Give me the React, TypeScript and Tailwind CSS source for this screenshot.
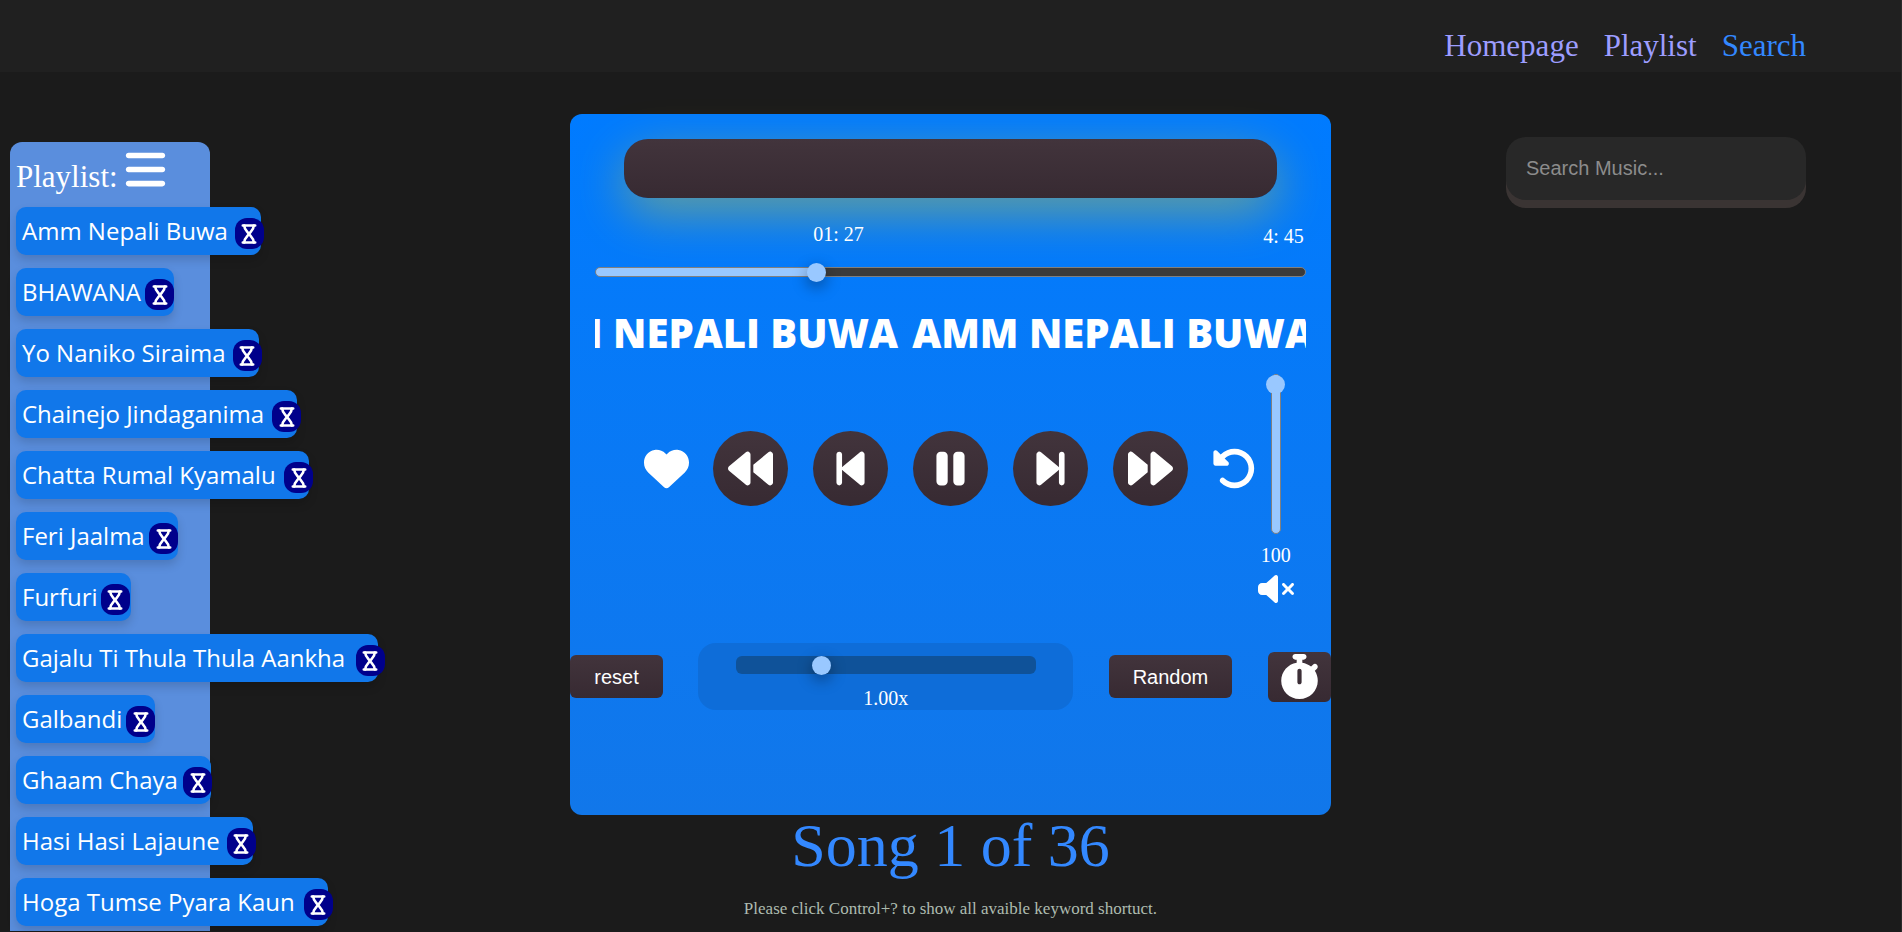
import { useState } from "react";
import type { ReactNode } from "react";
import {
  FaBackward,
  FaBackwardStep,
  FaBars,
  FaForward,
  FaForwardStep,
  FaHeart,
  FaPause,
  FaRotateLeft,
  FaStopwatch,
  FaVolumeXmark,
} from "react-icons/fa6";

const songs = [
  "Amm Nepali Buwa",
  "BHAWANA",
  "Yo Naniko Siraima",
  "Chainejo Jindaganima",
  "Chatta Rumal Kyamalu",
  "Feri Jaalma",
  "Furfuri",
  "Gajalu Ti Thula Thula Aankha",
  "Galbandi",
  "Ghaam Chaya",
  "Hasi Hasi Lajaune",
  "Hoga Tumse Pyara Kaun",
];

const thumb =
  "[&::-webkit-slider-thumb]:appearance-none [&::-webkit-slider-thumb]:size-[19px] [&::-webkit-slider-thumb]:rounded-full [&::-webkit-slider-thumb]:bg-[#99c8ff] [&::-webkit-slider-thumb]:shadow-[0_5px_15px_rgba(0,0,0,0.4)]";

const dark = "bg-linear-to-b from-[#42343c] to-[#372a32] text-white";

function Hourglass() {
  return (
    <svg viewBox="0 0 16 20" className="h-5 w-4" fill="none" stroke="currentColor" strokeWidth="2.6" strokeLinecap="round" strokeLinejoin="round">
      <path d="M1.8 1.5H14.2M1.8 18.5H14.2" />
      <path d="M3.2 1.5C3.2 5.8 6 7.4 8 10C10 7.4 12.8 5.8 12.8 1.5" />
      <path d="M3.2 18.5C3.2 14.2 6 12.6 8 10C10 12.6 12.8 14.2 12.8 18.5" />
    </svg>
  );
}

function Header() {
  return (
    <header className="h-[72px] shrink-0 bg-[#202020] pr-[95px] pt-7">
      <nav className="flex justify-end gap-[25px] text-[31px] leading-9 text-[#9d9dff]">
        <a href="#home">Homepage</a>
        <a href="#playlist">Playlist</a>
        <a href="#search" className="text-[#3388ff]">Search</a>
      </nav>
    </header>
  );
}

function Sidebar() {
  return (
    <aside className="mb-px ml-2.5 mt-[70px] w-[200px] rounded-t-xl bg-[#5a8edd] px-1.5">
      <h2 className="flex h-[65px] items-start gap-[5px] whitespace-nowrap pt-[5px] text-[31px] text-white">
        <span className="pt-3 leading-9">Playlist:</span>
        <button type="button" aria-label="Toggle playlist">
          <FaBars className="size-[45px]" />
        </button>
      </h2>
      <ul className="flex flex-col items-start gap-[13px]">
        {songs.map((song) => (
          <li
            key={song}
            className="h-12 whitespace-nowrap rounded-[10px] bg-[#1177ea] pl-1.5 pr-1 font-['Open_Sans',sans-serif] text-2xl leading-[48px] text-white shadow-[0_5px_10px_rgba(0,0,0,0.15)]"
          >
            <button type="button">{song}</button>
            <button
              type="button"
              aria-label={"Queue " + song}
              className="ml-[3%] inline-flex h-[31px] w-[29px] items-center justify-center rounded-xl bg-[#00008b] align-middle"
            >
              <Hourglass />
            </button>
          </li>
        ))}
      </ul>
    </aside>
  );
}

function Circle({ label, children }: { label: string; children: ReactNode }) {
  return (
    <button
      type="button"
      aria-label={label}
      className={`flex size-[75px] items-center justify-center rounded-full text-[45px] ${dark}`}
    >
      {children}
    </button>
  );
}

function Player() {
  const [time, setTime] = useState(87);
  const [volume, setVolume] = useState(100);
  const [speed, setSpeed] = useState(1);
  const filled = (time / 285) * 100;

  return (
    <section className="h-[701px] rounded-xl bg-linear-to-b from-[#007bff] to-[#1177ea] pt-[25px] text-xl text-white">
      <div className="mx-[54px] h-[59px] rounded-3xl bg-linear-to-b from-[#42343c] to-[#372a32] shadow-[0_15px_50px_rgba(255,215,0,0.4)]" />

      <div className="mx-[25px]">
        <div className="mt-6 flex h-[45px] justify-between pr-0.5 leading-6">
          <span className="pl-[218px]">01: 27</span>
          <span className="pt-0.5">4: 45</span>
        </div>
        <input
          type="range"
          aria-label="Song position"
          min={0}
          max={285}
          value={time}
          onChange={(e) => setTime(Number(e.target.value))}
          className={`block h-2.5 w-full appearance-none rounded-md border border-[#808080] ${thumb}`}
          style={{ background: `linear-gradient(to right, #99c8ff ${filled}%, #3b3b3b ${filled}%)` }}
        />
        <div className="mt-7 flex h-14 gap-3.5 overflow-hidden whitespace-nowrap font-['Open_Sans',sans-serif] text-[40px] font-extrabold leading-[56px]">
          <span className="-ml-[99px]">AMM NEPALI BUWA</span>
          <span>AMM NEPALI BUWA</span>
        </div>
      </div>

      <div className="mt-[13px] flex h-[237px] items-start justify-end pr-9">
        <div className="mt-[57px] flex items-center gap-6">
          <button type="button" aria-label="Like">
            <FaHeart className="size-[45px]" />
          </button>
          <div className="flex gap-[25px]">
            <Circle label="Rewind"><FaBackward /></Circle>
            <Circle label="Previous"><FaBackwardStep /></Circle>
            <Circle label="Pause"><FaPause /></Circle>
            <Circle label="Next"><FaForwardStep /></Circle>
            <Circle label="Fast forward"><FaForward /></Circle>
          </div>
          <button type="button" aria-label="Repeat">
            <FaRotateLeft className="size-[45px]" />
          </button>
        </div>
        <div className="flex w-[38px] flex-col items-center">
          <input
            type="range"
            aria-label="Volume"
            min={0}
            max={100}
            value={volume}
            onChange={(e) => setVolume(Number(e.target.value))}
            className="h-40 w-2.5 appearance-none rounded-md border border-[#808080] bg-[#99c8ff] [direction:rtl] [writing-mode:vertical-lr] [&::-webkit-slider-thumb]:size-[19px] [&::-webkit-slider-thumb]:appearance-none [&::-webkit-slider-thumb]:rounded-full [&::-webkit-slider-thumb]:bg-[#99c8ff]"
          />
          <span className="mt-[9px] leading-6">{volume}</span>
          <button type="button" aria-label="Mute" className="mt-1">
            <FaVolumeXmark className="size-9" />
          </button>
        </div>
      </div>

      <div className="mt-8 flex items-center justify-between">
        <button type="button" className={`h-[43px] rounded-md px-6 font-['Liberation_Sans',Arial,sans-serif] ${dark}`}>
          reset
        </button>
        <div className="flex h-[67px] w-[375px] flex-col items-center rounded-[18px] bg-[#0e6dd9] pt-[13px]">
          <input
            type="range"
            aria-label="Playback speed"
            min={0.25}
            max={3}
            step={0.05}
            value={speed}
            onChange={(e) => setSpeed(Number(e.target.value))}
            className={`h-[18px] w-[300px] appearance-none rounded-md bg-[#0f5299] ${thumb}`}
          />
          <span className="mt-3 leading-6">{speed.toFixed(2)}x</span>
        </div>
        <button type="button" className={`h-[43px] rounded-md px-6 font-['Liberation_Sans',Arial,sans-serif] ${dark}`}>
          Random
        </button>
        <button type="button" aria-label="Timer" className={`flex h-[50px] w-[63px] items-center justify-center rounded-md ${dark}`}>
          <FaStopwatch className="size-[45px]" />
        </button>
      </div>
    </section>
  );
}

export default function App() {
  return (
    <div className="flex h-screen flex-col overflow-hidden border-r border-[#2b2b2b] bg-[#1b1b1b] font-['Liberation_Serif','Times_New_Roman',serif]">
      <Header />
      <main className="grid min-h-0 grow grid-cols-[1fr_40%_1fr]">
        <Sidebar />
        <div className="pt-[42px] text-center">
          <Player />
          <p className="text-[62px] leading-[60px] text-[#3388ff]">Song 1 of 36</p>
          <p className="mt-[22px] text-[17px] leading-6 text-[#aebbb0]">
            Please click Control+? to show all avaible keyword shortuct.
          </p>
        </div>
        <div className="flex justify-end pr-[95px] pt-[65px]">
          <input
            type="search"
            aria-label="Search music"
            placeholder="Search Music..."
            className="h-[63px] w-[300px] rounded-[20px] bg-[#282828] px-5 font-['Liberation_Sans',Arial,sans-serif] text-xl text-white shadow-[0_8px_0_#3a3433] placeholder:text-[#8c8c8c]"
          />
        </div>
      </main>
    </div>
  );
}
